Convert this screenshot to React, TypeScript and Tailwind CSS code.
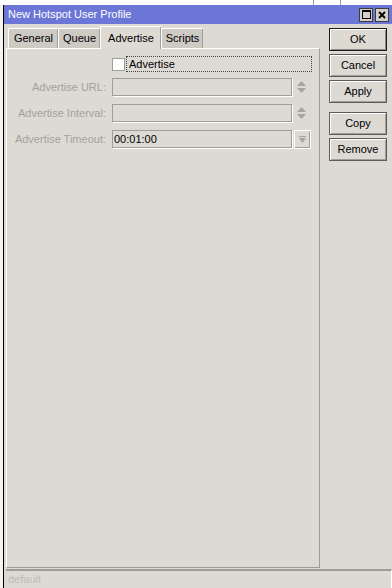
import React from 'react';

const font = { fontFamily: '"Liberation Sans", Arial, sans-serif' };

function Spinner() {
  return (
    <svg width="11" height="14" viewBox="0 0 11 14" className="shrink-0">
      <path d="M5.5 1 L10 6 L1 6 Z" fill="#a6a49f" />
      <path d="M5.5 13 L10 8 L1 8 Z" fill="#a6a49f" />
    </svg>
  );
}

function Field({ label, value, drop }: { label: string; value?: string; drop?: boolean }) {
  return (
    <div className="flex items-center h-[18px]">
      <div className="w-[105px] flex justify-end whitespace-nowrap text-[#a3a19c] pr-[6px]">{label}</div>
      <div
        className={`h-[18px] w-[180px] border border-[#a09e99] shadow-[1px_1px_0_#ffffff] flex items-center pl-[1px] ${
          value ? 'text-black' : ''
        }`}
      >
        {value}
      </div>
      {drop ? (
        <div className="ml-[2px] w-[17px] h-[19px] border border-[#ffffff] shadow-[inset_-1px_-1px_0_#a09e99] flex items-center justify-center">
          <svg width="9" height="9" viewBox="0 0 9 9">
            <rect x="1" y="1" width="7" height="1" fill="#a6a49f" />
            <path d="M1 3 L8 3 L4.5 8 Z" fill="#a6a49f" />
          </svg>
        </div>
      ) : (
        <div className="ml-[4px]">
          <Spinner />
        </div>
      )}
    </div>
  );
}

function Btn({ label, main }: { label: string; main?: boolean }) {
  return (
    <div
      className={`h-[23px] w-[58px] flex items-center justify-center text-black ${
        main
          ? 'border border-[#1a1a1a] shadow-[inset_1px_1px_0_#ffffff,inset_-1px_-1px_0_#8c8a86]'
          : 'border border-[#5c5b58] shadow-[inset_1px_1px_0_#ffffff,inset_-1px_-1px_0_#a09e99]'
      }`}
    >
      {label}
    </div>
  );
}

const tabs = ['General', 'Queue', 'Advertise', 'Scripts'];

export default function App() {
  return (
    <div className="w-[392px] h-[588px] bg-white overflow-hidden flex flex-col text-[11px]" style={font}>
      <div className="h-[5px] flex">
        <div className="w-[313px]" />
        <div className="w-[1px] bg-[#9a9a9a]" />
        <div className="w-[26px]" />
        <div className="w-[1px] bg-[#9a9a9a]" />
      </div>
      <div className="flex flex-1 min-h-0">
        <div className="w-[3px] bg-[#f4f3f0]" />
        <div className="flex-1 flex flex-col border-l border-black bg-[#dddad4]">
          {/* title bar */}
          <div className="h-[19px] bg-[#6b76d6] flex items-center pl-[4px] pr-[3px] text-white">
            <span className="flex-1 text-[11px]">New Hotspot User Profile</span>
            <div className="flex gap-[2px]">
              <div className="w-[14px] h-[14px] bg-[#d4d0c8] border border-[#3c3c3c] flex items-center justify-center">
                <div className="w-[9px] h-[9px] border border-black border-t-2" />
              </div>
              <div className="w-[14px] h-[14px] bg-[#d4d0c8] border border-[#3c3c3c] flex items-center justify-center">
                <svg width="8" height="8" viewBox="0 0 8 8">
                  <path d="M1 1 L7 7 M7 1 L1 7" stroke="#000" strokeWidth="1.8" />
                </svg>
              </div>
            </div>
          </div>
          {/* body */}
          <div className="flex-1 flex flex-col min-h-0">
            <div className="flex flex-1 min-h-0">
              <div className="w-[316px] pl-[2px] flex flex-col">
                <div className="flex items-end h-[24px] pl-[2px] relative z-10">
                  {tabs.map((t) => {
                    const sel = t === 'Advertise';
                    const w = t === 'General' ? 'w-[50px]' : t === 'Queue' ? 'w-[42px]' : t === 'Advertise' ? 'w-[61px]' : 'w-[42px]';
                    return sel ? (
                      <div
                        key={t}
                        className={`${w} h-[23px] -mb-[1px] bg-[#dddad4] border-t border-l border-white shadow-[inset_-1px_0_0_#a09e99] flex items-start justify-center pt-[3px] text-black`}
                      >
                        {t}
                      </div>
                    ) : (
                      <div
                        key={t}
                        className={`${w} h-[20px] bg-[#cdcac4] border-t border-l border-white shadow-[inset_-1px_0_0_#a09e99] flex items-center justify-center text-black`}
                      >
                        {t}
                      </div>
                    );
                  })}
                </div>
                <div className="flex-1 border-t border-l border-white border-r border-b border-r-[#9e9c97] border-b-[#9e9c97] w-[314px] pt-[7px]">
                  <div className="flex items-center h-[16px]">
                    <div className="w-[105px]" />
                    <div className="w-[13px] h-[13px] bg-white border border-[#a09e99]" />
                    <div className="ml-[1px] w-[186px] h-[16px] border border-dotted border-[#444] flex items-center pl-[2px] text-black">
                      Advertise
                    </div>
                  </div>
                  <div className="flex flex-col gap-[8px] mt-[6px]">
                    <Field label="Advertise URL:" />
                    <Field label="Advertise Interval:" />
                    <Field label="Advertise Timeout:" value="00:01:00" drop />
                  </div>
                </div>
              </div>
              <div className="flex-1 flex flex-col pl-[9px] pt-[4px]">
                <div className="flex flex-col gap-[3px]">
                  <Btn label="OK" main />
                  <Btn label="Cancel" />
                  <Btn label="Apply" />
                </div>
                <div className="flex flex-col gap-[3px] mt-[9px]">
                  <Btn label="Copy" />
                  <Btn label="Remove" />
                </div>
              </div>
            </div>
            <div className="h-[19px] mt-[1px] ml-[2px] border-t-2 border-[#9e9c97] border-r border-r-white flex items-center pl-[2px] text-[#bdbbb6]">
              default
            </div>
          </div>
        </div>
      </div>
    </div>
  );
}
